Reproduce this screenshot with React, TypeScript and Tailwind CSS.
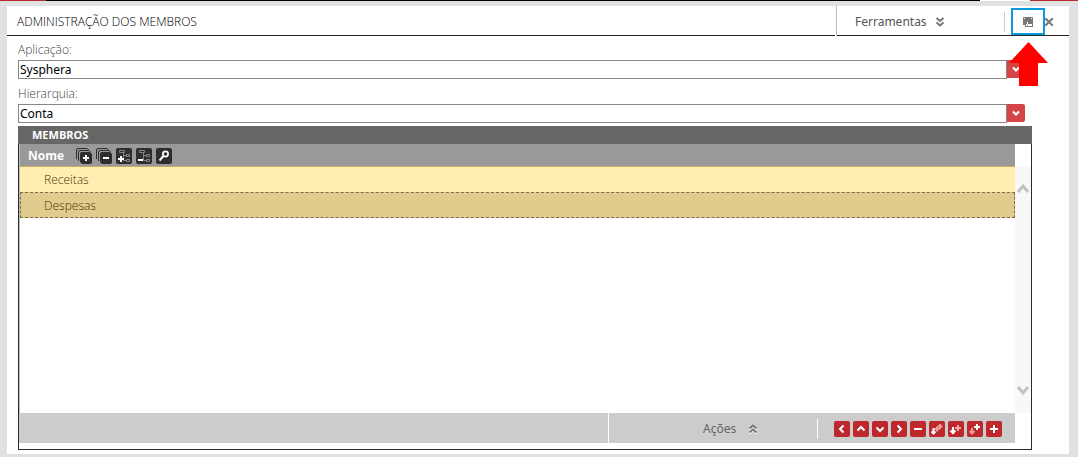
import { useState, type ReactNode } from "react";

type IconProps = { children: ReactNode; size?: number };

function Icon({ children, size = 16 }: IconProps) {
  return (
    <svg width={size} height={size} viewBox={`0 0 ${size} ${size}`} fill="none" aria-hidden="true" className="block shrink-0">
      {children}
    </svg>
  );
}

function DoubleChevron({ up = false }: { up?: boolean }) {
  return (
    <Icon size={10}>
      {up && <path d="M1 6l4-3 4 3M1 10l4-3 4 3" stroke="#fff" strokeWidth="1.5" />}
      <path
        d={up ? "M1.5 4.5L5 1.5l3.500 3M1.500 8.500L5 5.500l3.500 3" : "M1.500 1L5 4l3.500-3M1.500 5.500l3.500 3 3.500-3"}
        stroke="#777"
        strokeWidth="2"
      />
    </Icon>
  );
}

function SelectField({ id, label, value }: { id: string; label: string; value: string }) {
  return (
    <div>
      <label htmlFor={id} className="block h-[18px] text-xs leading-5 font-light text-[#444]">
        {label}
      </label>
      <div className="mt-0.5 flex h-[19px]">
        <select
          id={id}
          defaultValue={value}
          className="block h-full min-w-0 flex-1 appearance-none border border-[#888] bg-white pl-px font-['Noto_Sans',sans-serif] text-xs leading-4 text-black outline-none"
        >
          <option>{value}</option>
        </select>
        <span className="pointer-events-none flex h-[18px] w-[18px] items-center justify-center rounded-r-xs bg-[#d64545]">
          <Icon size={8}>
            <path d="M1 2.500l3 3 3-3" stroke="#fff" strokeWidth="2" />
          </Icon>
        </span>
      </div>
    </div>
  );
}

const stack = (
  <>
    <path d="M.5 11V2Q.5.5 2 .5h9l1.500 1.500M2.500 13V4q0-1.500 1.500-1.500h9l1.500 1.500" stroke="#2e2e2e" />
    <path d="M6 4h8l2 2v8q0 2-2 2H6l-2-2V6q0-2 2-2z" fill="#2e2e2e" />
  </>
);

const tree = (
  <>
    <rect width="16" height="16" rx="2" fill="#2e2e2e" />
    <path d="M3.500 2.500h5v2h-5zM7.500 5v7.500H10M7.500 7.500H10M10.500 6.500h3v2h-3zM10.500 11.500h3v2h-3z" stroke="#858585" />
  </>
);

const treeTools: { label: string; art: ReactNode }[] = [
  { label: "Expandir tudo", art: <>{stack}<path d="M7 10h6M10 7v6" stroke="#fff" strokeWidth="2" /></> },
  { label: "Recolher tudo", art: <>{stack}<path d="M7 10h6" stroke="#fff" strokeWidth="2" /></> },
  { label: "Expandir nível", art: <>{tree}<path d="M2 11h6M5 8v6" stroke="#fff" strokeWidth="2" /></> },
  { label: "Recolher nível", art: <>{tree}<path d="M2 12h5" stroke="#fff" strokeWidth="2" /></> },
  {
    label: "Pesquisar",
    art: (
      <>
        <rect width="16" height="16" rx="2" fill="#2e2e2e" />
        <circle cx="9.500" cy="6" r="2.600" stroke="#fff" strokeWidth="1.700" />
        <path d="M7.500 8l-4 4.500" stroke="#fff" strokeWidth="2" />
      </>
    ),
  },
];

const actions: { label: string; art: ReactNode }[] = [
  { label: "Mover para a esquerda", art: <path d="M9.500 4.500L6 8l3.500 3.500" stroke="#fff" strokeWidth="2" /> },
  { label: "Mover para cima", art: <path d="M4.500 9.500L8 6l3.500 3.500" stroke="#fff" strokeWidth="2" /> },
  { label: "Mover para baixo", art: <path d="M4.500 6.500L8 10l3.500-3.500" stroke="#fff" strokeWidth="2" /> },
  { label: "Mover para a direita", art: <path d="M6.500 4.500L10 8l-3.500 3.500" stroke="#fff" strokeWidth="2" /> },
  { label: "Remover", art: <path d="M4 8h8" stroke="#fff" strokeWidth="2" /> },
  {
    label: "Remover ramo",
    art: (
      <>
        <path d="M5.500 8h5M8 5.500v5M8.500 5.500h5M11 3v5" stroke="#f29c9c" strokeWidth="2" />
        <path d="M4.500 7v5.500M2.500 10.500l2 2 2-2" stroke="#fff" strokeWidth="2" />
      </>
    ),
  },
  {
    label: "Adicionar filho",
    art: (
      <>
        <path d="M7 7h6M10 4v6" stroke="#f4a6a6" strokeWidth="2" />
        <path d="M5 6v7M2.500 9.500l2.500 2.500 2.500-2.500" stroke="#fff" strokeWidth="2" />
      </>
    ),
  },
  {
    label: "Adicionar irmão",
    art: (
      <>
        <path d="M7 6h6M10 3v6" stroke="#fff" strokeWidth="2" />
        <path d="M5 7v6M2.500 10l2.500 2.500 2.500-2.500" stroke="#f09a9a" strokeWidth="2" />
      </>
    ),
  },
  { label: "Adicionar", art: <path d="M4 8h8M8 4v8" stroke="#fff" strokeWidth="2" /> },
];

export default function App() {
  const [selected, setSelected] = useState("Despesas");

  return (
    <div className="flex min-h-screen flex-col bg-[#e1e1e1] font-['Open_Sans',sans-serif]">
      <div className="flex h-px">
        <div className="w-[46px] bg-[#b52b30]" />
        <div className="flex-1 bg-black" />
        <div className="w-[50px] bg-white" />
        <div className="w-12 bg-[#b52b30]" />
      </div>

      <main className="mt-[5px] mr-[9px] mb-[3px] ml-[7px] flex flex-1 flex-col bg-white">
        <header className="flex h-[30px] gap-px">
          <h1 className="flex flex-1 items-center border-b border-[#222] pt-0.5 pl-[10px] text-xs font-light text-black">
            ADMINISTRAÇÃO DOS MEMBROS
          </h1>
          <div className="flex w-[233px] border-l border-[#bbb]">
            <div className="flex flex-1 items-center border-b border-[#222] pt-0.5">
              <button type="button" className="ml-[18px] flex items-center gap-2 font-['Noto_Sans',sans-serif] text-xs text-[#555]">
                Ferramentas
                <DoubleChevron />
              </button>
              <div className="mr-1.5 ml-auto h-5 w-px bg-[#ccc]" />
              <div className="relative">
                <button
                  type="button"
                  aria-label="Salvar"
                  className="flex h-[27px] w-[34px] items-center justify-center border-2 border-[#0a9ae0] bg-white"
                >
                  <Icon size={10}>
                    <path d="M0 1Q0 0 1 0h8q1 0 1 1v9H2V8H0z" fill="#777" />
                    <path d="M3 7h6v2H3zM4 5h1v2H4z" fill="#fff" />
                    <path d="M4 7h1v2H4z" fill="#bbb" />
                    <path d="M1 1.500h1M8 1.500h1" stroke="#fff" />
                  </Icon>
                </button>
                <svg
                  width="39"
                  height="45"
                  viewBox="0 0 39 45"
                  aria-hidden="true"
                  className="pointer-events-none absolute top-[34px] -left-0.5 z-10"
                >
                  <path d="M19.500 0L39 21H29v23H10V21H0z" fill="#f00" />
                </svg>
              </div>
              <button type="button" aria-label="Fechar" className="mr-4 flex h-5 w-2 items-center justify-center">
                <Icon size={8}>
                  <path d="M0 0l8 8M8 0L0 8" stroke="#777" strokeWidth="2" />
                </Icon>
              </button>
            </div>
          </div>
        </header>

        <div className="mr-11 ml-[11px] flex flex-col gap-[5px] pt-1">
          <SelectField id="aplicacao" label="Aplicação:" value="Sysphera" />
          <SelectField id="hierarquia" label="Hierarquia:" value="Conta" />
        </div>

        <section className="mt-[3px] mr-[37px] mb-1 ml-[11px] flex flex-1 flex-col border border-t-0 border-[#2b2b2b] pb-1.5">
          <h2 className="-mx-px h-[18px] bg-[#666] pl-[14px] text-[11px] leading-[18px] font-bold text-white">MEMBROS</h2>
          <div className="flex flex-1">
            <div className="flex-1 border-l border-[#bbb]">
              <table className="w-full border-collapse text-xs">
                <thead>
                  <tr className="h-[22px] bg-[#999]">
                    <th className="p-0 pl-2 text-left">
                      <div className="flex items-center gap-3 pt-0.5 text-xs leading-4 font-bold text-white">
                        Nome
                        <span className="flex gap-1">
                          {treeTools.map((tool) => (
                            <button key={tool.label} type="button" aria-label={tool.label}>
                              <Icon>{tool.art}</Icon>
                            </button>
                          ))}
                        </span>
                      </div>
                    </th>
                  </tr>
                </thead>
                <tbody>
                  {["Receitas", "Despesas"].map((name) => (
                    <tr
                      key={name}
                      onClick={() => setSelected(name)}
                      className={
                        name === selected
                          ? "h-[26px] bg-[#e2cc8d] outline outline-dashed -outline-offset-1 outline-[#7d6c46]"
                          : "h-[26px] border-t border-[#c7ae5c] bg-[#ffeeb0]"
                      }
                    >
                      <td className="p-0 pt-0.5 pl-6 font-light text-[#4a3300]">{name}</td>
                    </tr>
                  ))}
                </tbody>
              </table>
            </div>
            <div className="mt-[23px] flex w-4 flex-col items-center justify-between bg-[#f8f8f8] pt-4 pb-[17px]">
              <button type="button" aria-label="Rolar para cima">
                <Icon size={12}>
                  <path d="M1 9l5-6 5 6" stroke="#c2c2c2" strokeWidth="3" />
                </Icon>
              </button>
              <button type="button" aria-label="Rolar para baixo">
                <Icon size={12}>
                  <path d="M1 3l5 6 5-6" stroke="#c2c2c2" strokeWidth="3" />
                </Icon>
              </button>
            </div>
          </div>

          <footer className="mr-4 flex h-[30px] bg-[#ccc]">
            <div className="flex-1" />
            <div className="flex w-[407px] items-center border-l border-white pt-0.5">
              <button
                type="button"
                className="ml-[94px] flex items-center gap-3 font-['Noto_Sans',sans-serif] text-xs text-[#666]"
              >
                Ações
                <DoubleChevron up />
              </button>
              <div className="ml-auto h-5 w-px bg-white" />
              <div className="mr-[13px] ml-4 flex gap-[3px]">
                {actions.map((action) => (
                  <button key={action.label} type="button" aria-label={action.label} className="rounded-xs bg-[#bd282c]">
                    <Icon>{action.art}</Icon>
                  </button>
                ))}
              </div>
            </div>
          </footer>
        </section>
      </main>
    </div>
  );
}
